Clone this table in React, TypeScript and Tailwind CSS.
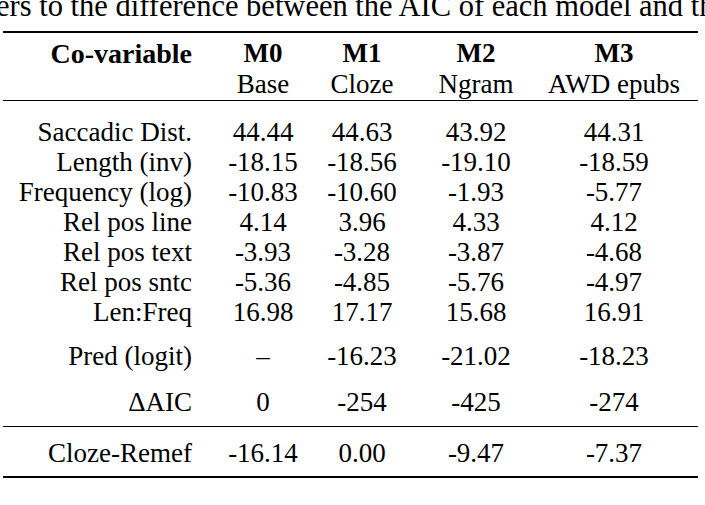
const serif = { fontFamily: '"Liberation Serif", "Times New Roman", serif' };

const cols = "grid grid-cols-[211px_98px_100px_128px_148px]";

const body: [string, string, string, string, string][] = [
  ["Saccadic Dist.", "44.44", "44.63", "43.92", "44.31"],
  ["Length (inv)", "-18.15", "-18.56", "-19.10", "-18.59"],
  ["Frequency (log)", "-10.83", "-10.60", "-1.93", "-5.77"],
  ["Rel pos line", "4.14", "3.96", "4.33", "4.12"],
  ["Rel pos text", "-3.93", "-3.28", "-3.87", "-4.68"],
  ["Rel pos sntc", "-5.36", "-4.85", "-5.76", "-4.97"],
  ["Len:Freq", "16.98", "17.17", "15.68", "16.91"],
];

function Row({ cells, className = "" }: { cells: string[]; className?: string }) {
  return (
    <div className={`${cols} leading-[30px] ${className}`}>
      <div className="text-right pr-[22px]">{cells[0]}</div>
      {cells.slice(1).map((c, i) => (
        <div key={i} className="text-center">{c}</div>
      ))}
    </div>
  );
}

export default function App() {
  return (
    <div className="w-[705px] h-[505px] overflow-hidden bg-white text-black" style={serif}>
      {/* caption tail from the page above */}
      <div className="h-[31px] overflow-hidden">
        <div className="mt-[-9px] ml-[-4px] whitespace-nowrap text-[30.5px] leading-[31px]">
          ers to the difference between the AIC of each model and th
        </div>
      </div>

      <div className="ml-[3px] w-[695px] text-[27px]">
        <div className="h-[2px] bg-black" />

        <div className={`${cols} pt-[5px] leading-[31px]`}>
          <div className="text-right pr-[22px] font-bold text-[28px]">Co-variable</div>
          <div className="text-center"><div className="font-bold">M0</div><div>Base</div></div>
          <div className="text-center"><div className="font-bold">M1</div><div>Cloze</div></div>
          <div className="text-center"><div className="font-bold">M2</div><div>Ngram</div></div>
          <div className="text-center"><div className="font-bold">M3</div><div>AWD epubs</div></div>
        </div>
        <div className="h-px bg-black" />

        <div className="pt-[16px]">
          {body.map((r) => (
            <Row key={r[0]} cells={r} />
          ))}
        </div>

        <Row cells={["Pred (logit)", "–", "-16.23", "-21.02", "-18.23"]} className="mt-[14px]" />
        <Row cells={["ΔAIC", "0", "-254", "-425", "-274"]} className="mt-[16px]" />

        <div className="mt-[9px] h-px bg-black" />
        <Row cells={["Cloze-Remef", "-16.14", "0.00", "-9.47", "-7.37"]} className="mt-[11px]" />
        <div className="mt-[8px] h-[2px] bg-black" />
      </div>
    </div>
  );
}
